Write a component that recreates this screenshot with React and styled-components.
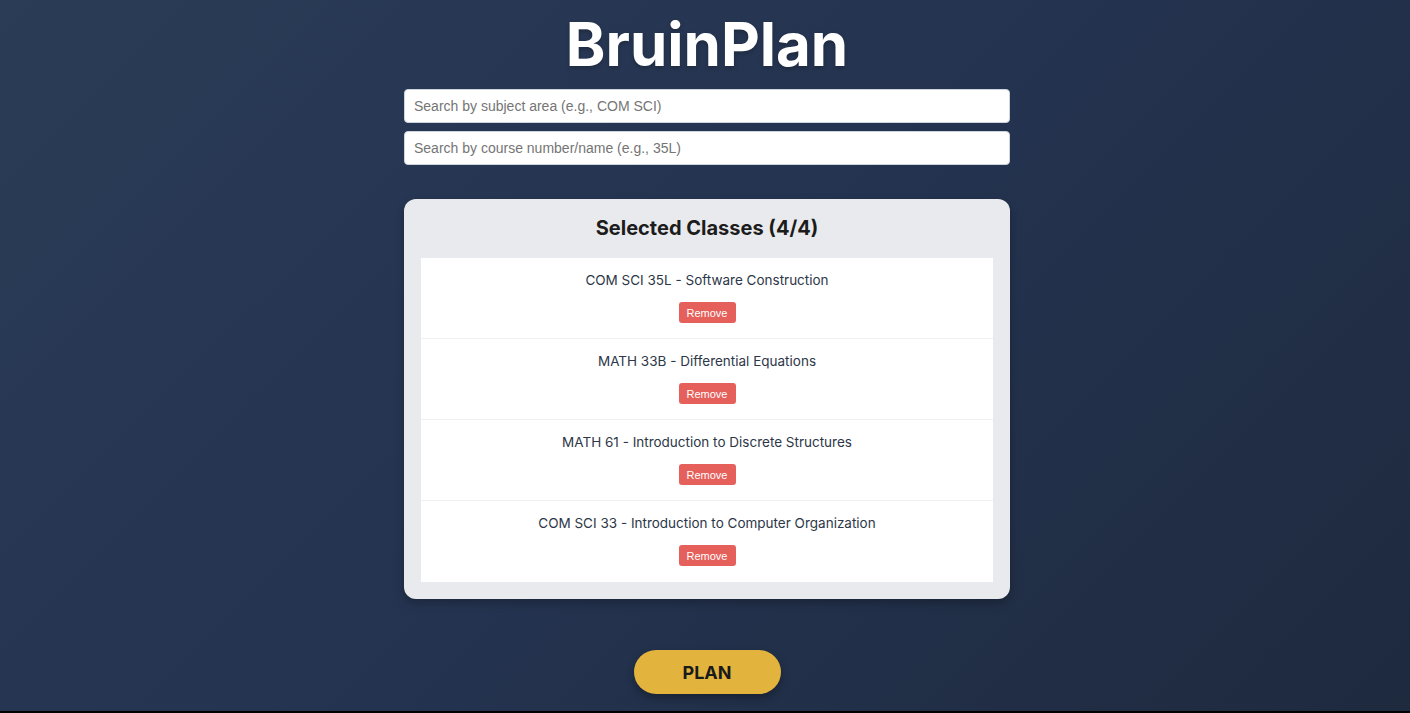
import styled, { createGlobalStyle } from "styled-components";

const GlobalStyle = createGlobalStyle`
  html {
    background: #000;
  }
  body {
    margin: 0;
    font-family: Inter, "Noto Sans", sans-serif;
  }
`;

const Page = styled.div`
  height: 711px;
  box-sizing: border-box;
  background: linear-gradient(135deg, #2b3c57 0%, #243350 50%, #1e2a3e 100%);
  display: flex;
  flex-direction: column;
  align-items: center;
  padding-left: 4px;
  overflow: hidden;
`;

const Title = styled.h1`
  margin: 3px 0 0;
  font-size: 60px;
  line-height: 82px;
  font-weight: 700;
  color: #ffffff;
  text-shadow: 0 2px 4px rgba(0, 0, 0, 0.25);
`;

const SearchStack = styled.div`
  width: 606px;
  margin-top: 4px;
  display: flex;
  flex-direction: column;
  gap: 8px;
`;

const SearchInput = styled.input`
  box-sizing: border-box;
  width: 100%;
  height: 34px;
  padding: 0 9px;
  border: 1px solid #cfd4dc;
  border-radius: 4px;
  background: #fff;
  font-family: "Liberation Sans", Arial, sans-serif;
  font-size: 14px;
  color: #333;
  &::placeholder {
    color: #757575;
  }
`;

const Card = styled.section`
  box-sizing: border-box;
  width: 606px;
  margin-top: 34px;
  padding: 17px;
  background: #e9eaed;
  border-radius: 12px;
  box-shadow: 0 4px 10px rgba(0, 0, 0, 0.25);
`;

const CardTitle = styled.h2`
  margin: 0 0 18px;
  text-align: center;
  font-size: 20px;
  line-height: 24px;
  font-weight: 700;
  color: #1c1c1c;
`;

const ClassList = styled.ul`
  list-style: none;
  margin: 0;
  padding: 0;
  background: #fff;
`;

const ClassItem = styled.li`
  box-sizing: border-box;
  height: 81px;
  display: flex;
  flex-direction: column;
  align-items: center;
  padding-top: 12px;
  border-bottom: ${(p) => (p.$last ? "none" : "1px solid #f0f0f0")};
`;

const ClassName = styled.span`
  display: block;
  font-size: 13.5px;
  line-height: 20px;
  color: #2d3748;
`;

const RemoveButton = styled.button`
  margin-top: 12px;
  height: 21px;
  width: 57px;
  border: none;
  border-radius: 3px;
  background: #e5605a;
  color: #fff;
  font-family: "Liberation Sans", Arial, sans-serif;
  font-size: 11px;
  cursor: pointer;
`;

const PlanButton = styled.button`
  margin-top: 51px;
  width: 147px;
  height: 44px;
  border: none;
  border-radius: 22px;
  background: #e3b43d;
  color: #1a1a1a;
  font-family: Inter, sans-serif;
  font-weight: 700;
  font-size: 18px;
  box-shadow: 0 4px 8px rgba(0, 0, 0, 0.3);
  cursor: pointer;
`;

const classes = [
  "COM SCI 35L - Software Construction",
  "MATH 33B - Differential Equations",
  "MATH 61 - Introduction to Discrete Structures",
  "COM SCI 33 - Introduction to Computer Organization",
];

export default function App() {
  return (
    <>
      <GlobalStyle />
      <Page>
        <Title>BruinPlan</Title>
        <SearchStack>
          <SearchInput placeholder="Search by subject area (e.g., COM SCI)" />
          <SearchInput placeholder="Search by course number/name (e.g., 35L)" />
        </SearchStack>
        <Card>
          <CardTitle>Selected Classes ({classes.length}/4)</CardTitle>
          <ClassList>
            {classes.map((c, i) => (
              <ClassItem key={c} $last={i === classes.length - 1}>
                <ClassName>{c}</ClassName>
                <RemoveButton>Remove</RemoveButton>
              </ClassItem>
            ))}
          </ClassList>
        </Card>
        <PlanButton>PLAN</PlanButton>
      </Page>
    </>
  );
}
